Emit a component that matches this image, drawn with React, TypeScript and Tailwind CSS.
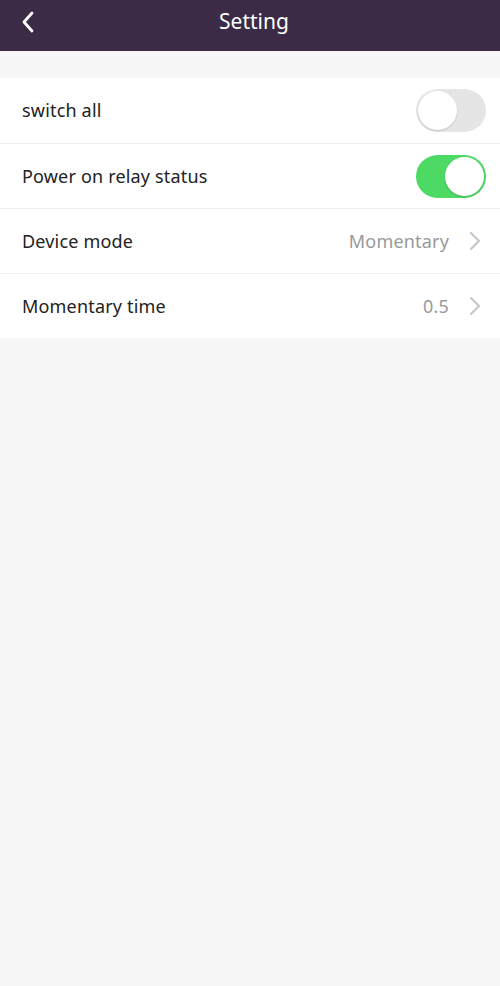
import React from 'react';

const Toggle: React.FC<{ on: boolean }> = ({ on }) => (
    <div
        className={
            on
                ? 'w-[70px] h-[43px] rounded-full bg-[#4cd964] p-[2px] flex justify-end'
                : 'w-[70px] h-[43px] rounded-full bg-[#e5e5e5] p-[2px] flex justify-start'
        }
    >
        <div className="w-[39px] h-[39px] rounded-full bg-white shadow-[0_1px_2px_rgba(0,0,0,0.15)]" />
    </div>
);

const Chevron: React.FC = () => (
    <svg width="12" height="20" viewBox="0 0 12 20" fill="none">
        <path d="M2 2l8 8-8 8" stroke="#c7c7cc" strokeWidth="2.2" strokeLinecap="round" strokeLinejoin="round" />
    </svg>
);

const rows = [
    { label: 'switch all', toggle: false },
    { label: 'Power on relay status', toggle: true },
    { label: 'Device mode', value: 'Momentary' },
    { label: 'Momentary time', value: '0.5' },
];

const App: React.FC = () => {
    return (
        <div className="w-[500px] h-[986px] bg-[#f7f7f7] font-['Noto_Sans','Liberation_Sans',sans-serif]">
            <header className="h-[51px] bg-[#3c2b47] flex items-center relative pb-[8px]">
                <div className="pl-[20px] flex items-center">
                    <svg width="16" height="24" viewBox="0 0 16 24" fill="none">
                        <path d="M12 3L4 12l8 9" stroke="white" strokeWidth="2.8" strokeLinecap="round" strokeLinejoin="round" />
                    </svg>
                </div>
                <h1 className="absolute left-[8px] right-0 top-[6px] text-center text-white text-[21px] leading-[30px] pointer-events-none">Setting</h1>
            </header>

            <div className="mt-[27px] bg-white">
                {rows.map((row, i) => (
                    <div
                        key={i}
                        className={
                            i === 0
                                ? 'h-[65px] flex items-center justify-between pl-[22px] pr-[14px]'
                                : 'h-[65px] flex items-center justify-between pl-[22px] pr-[14px] border-t border-[#efefef]'
                        }
                    >
                        <span className="text-[18px] tracking-[0.01em] text-[#222]">{row.label}</span>
                        {row.toggle !== undefined ? (
                            <Toggle on={row.toggle} />
                        ) : (
                            <div className="flex items-center gap-[20px] pr-[5px]">
                                <span className="text-[18px] tracking-[0.01em] text-[#999]">{row.value}</span>
                                <Chevron />
                            </div>
                        )}
                    </div>
                ))}
            </div>
        </div>
    );
};

export default App;
